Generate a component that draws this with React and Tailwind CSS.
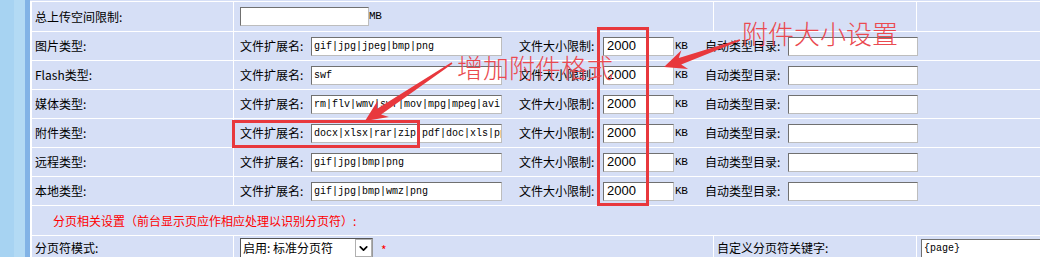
import React from 'react';
import { ChevronDown } from 'lucide-react';

const TYPE_ROWS = [
  { label: '图片类型:', ext: 'gif|jpg|jpeg|bmp|png' },
  { label: 'Flash类型:', ext: 'swf' },
  { label: '媒体类型:', ext: 'rm|flv|wmv|swf|mov|mpg|mpeg|avi' },
  { label: '附件类型:', ext: 'docx|xlsx|rar|zip|pdf|doc|xls|ppt|pptx' },
  { label: '远程类型:', ext: 'gif|jpg|bmp|png' },
  { label: '本地类型:', ext: 'gif|jpg|bmp|wmz|png' },
];

// tapered arrow like the screenshot tool draws
const arrowPoints = (x1, y1, x2, y2) => {
  const dx = x2 - x1;
  const dy = y2 - y1;
  const len = Math.hypot(dx, dy);
  const ux = dx / len;
  const uy = dy / len;
  const nx = -uy;
  const ny = ux;
  const head = 22;
  const hw = 10;
  const tail = 0.8;
  const neck = 3.5;
  const bx = x2 - ux * head;
  const by = y2 - uy * head;
  const nbx = x2 - ux * (head - 5);
  const nby = y2 - uy * (head - 5);
  return [
    [x1 + nx * tail, y1 + ny * tail],
    [nbx + nx * neck, nby + ny * neck],
    [bx + nx * hw, by + ny * hw],
    [x2, y2],
    [bx - nx * hw, by - ny * hw],
    [nbx - nx * neck, nby - ny * neck],
    [x1 - nx * tail, y1 - ny * tail],
  ]
    .map((p) => p.map((v) => v.toFixed(1)).join(','))
    .join(' ');
};

const Field = ({ value = '', className = '' }) => (
  <input
    readOnly
    value={value}
    className={`h-[19px] shrink-0 bg-white border border-t-[#707070] border-l-[#707070] border-r-[#bdbdbd] border-b-[#bdbdbd] outline-none ${className}`}
  />
);

const Cell = ({ children, className = '' }) => (
  <div className={`bg-[#d6dff6] flex items-center overflow-hidden whitespace-nowrap ${className}`}>{children}</div>
);

export default function App() {
  return (
    <div className="relative w-[1040px] h-[257px] overflow-hidden flex text-[12px] text-black font-['Noto_Sans_CJK_SC','Liberation_Sans',sans-serif]">
      {/* left frame strip */}
      <div className="w-[14px] bg-[#a7d3f2]" />
      <div className="w-[11px] bg-[#b3daf4]" />
      <div className="w-[5px] bg-[#82b3e6]" />

      <div className="flex-1 flex flex-col bg-[#d6dff6]">
        <div className="h-px shrink-0" />
        <div className="grid grid-cols-[201px_479px_202px_1fr] grid-rows-[29px_repeat(6,28px)_29px_24px] gap-px bg-white pt-px pl-[2px]">
          {/* row 1 */}
          <Cell className="pl-[3px]">总上传空间限制:</Cell>
          <Cell className="pl-[6px]">
            <Field className="w-[129px]" />
            <span className="font-['Liberation_Mono',monospace] text-[11px] tracking-[-0.3px]">MB</span>
          </Cell>
          <Cell />
          <Cell />

          {TYPE_ROWS.map((row) => (
            <React.Fragment key={row.label}>
              <Cell className="pl-[3px]">{row.label}</Cell>
              <Cell className="col-span-3 pl-[6px]">
                <span className="w-[71px] shrink-0">文件扩展名:</span>
                <Field value={row.ext} className="w-[191px] pl-[2px] font-['Liberation_Mono',monospace] text-[10px]" />
                <span className="w-[84px] shrink-0 ml-[17px]">文件大小限制:</span>
                <Field value="2000" className="w-[71px] pl-[3px] font-['Liberation_Sans',sans-serif] text-[13px]" />
                <span className="w-[31px] shrink-0 pl-[1px] font-['Liberation_Mono',monospace] text-[11px] tracking-[-0.3px]">KB</span>
                <span className="w-[83px] shrink-0">自动类型目录:</span>
                <Field className="w-[130px]" />
              </Cell>
            </React.Fragment>
          ))}

          {/* row 8 */}
          <Cell className="col-span-4 pl-[21px] text-[#f00]">分页相关设置（前台显示页应作相应处理以识别分页符）:</Cell>

          {/* row 9 */}
          <Cell className="pl-[3px]">分页符模式:</Cell>
          <Cell className="pl-[6px]">
            <div className="w-[133px] h-[20px] flex bg-white border border-t-[#555] border-l-[#555] border-r-[#999] border-b-[#999]">
              <span className="flex-1 pl-[2px] leading-[18px]">启用: 标准分页符</span>
              <span className="w-[17px] h-full flex items-center justify-center bg-white border border-[#b0b0b0]">
                <ChevronDown size={13} strokeWidth={3.2} />
              </span>
            </div>
            <span className="ml-[8px] pt-[3px] text-[#f00] text-[12px] leading-none">*</span>
          </Cell>
          <Cell className="pl-[3px]">自定义分页符关键字:</Cell>
          <Cell className="pl-[4px]">
            <Field value="{page}" className="w-[130px] pl-[2px] font-['Liberation_Mono',monospace] text-[10px]" />
          </Cell>
        </div>
      </div>

      {/* annotation layer */}
      <div className="absolute left-[232px] top-[120px] w-[188px] h-[28px] border-[3px] border-[#e8383d]" />
      <div className="absolute left-[597px] top-[27px] w-[52px] h-[179px] border-[3px] border-[#e8383d]" />
      <span className="absolute left-[457px] top-[54px] text-[26px] leading-none text-[#ea4a50] font-light">增加附件格式</span>
      <span className="absolute left-[742px] top-[20px] text-[26px] leading-none text-[#ea4a50] font-light">附件大小设置</span>
      <svg className="absolute left-0 top-0 pointer-events-none" width="1040" height="257" viewBox="0 0 1040 257">
        <polygon points={arrowPoints(452, 63, 365, 121)} fill="#e8383d" />
        <polygon points={arrowPoints(740, 40, 664, 67)} fill="#e8383d" />
      </svg>
    </div>
  );
}
